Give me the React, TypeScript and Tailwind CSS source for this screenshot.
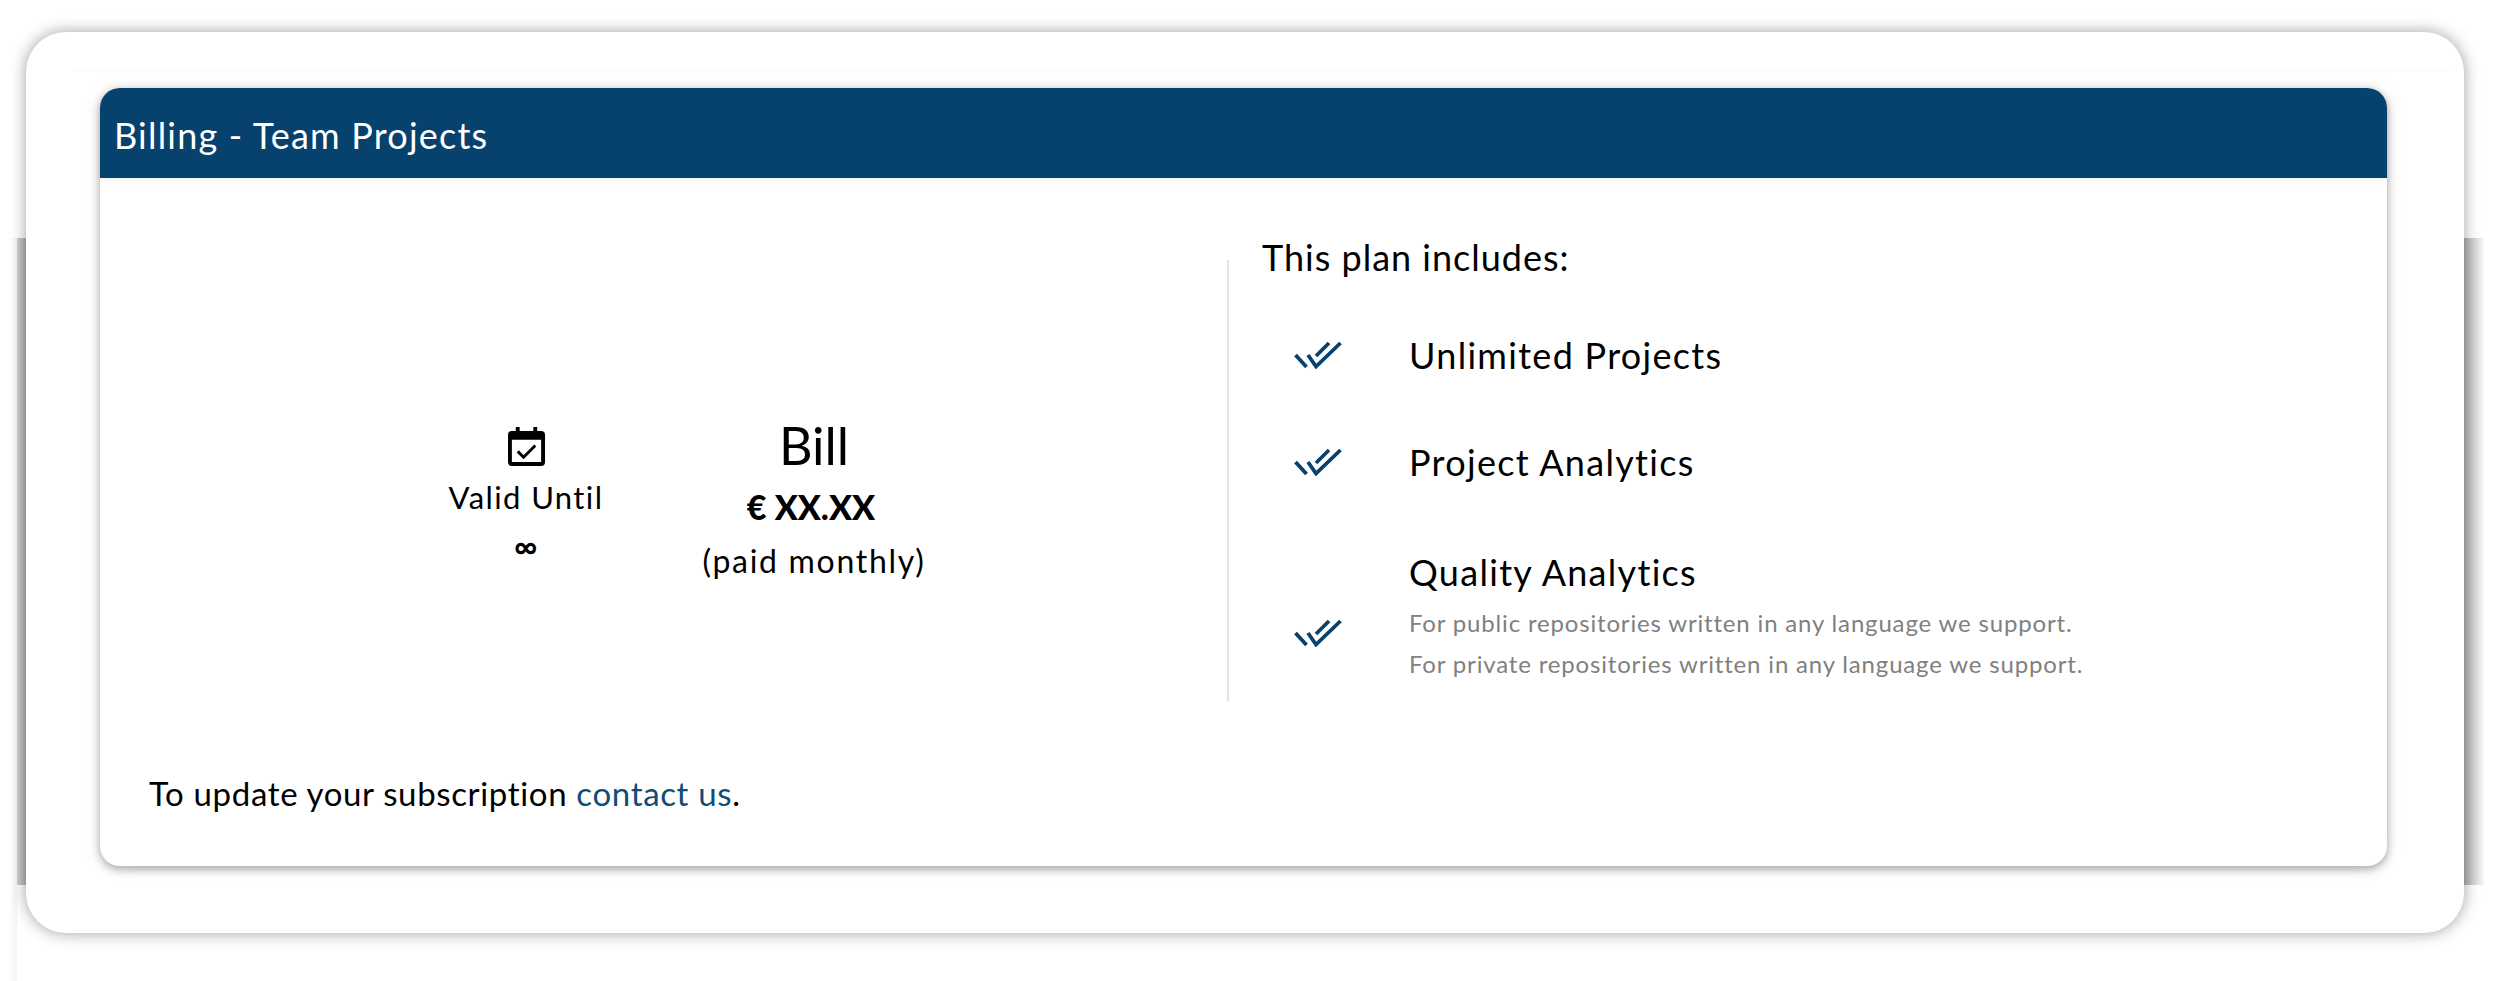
const features = [
  { title: 'Unlimited Projects' },
  { title: 'Project Analytics' },
  {
    title: 'Quality Analytics',
    notes: [
      'For public repositories written in any language we support.',
      'For private repositories written in any language we support.',
    ],
  },
];

function DoubleCheck({ low }: { low?: boolean }) {
  return (
    <svg
      width="48"
      height="28"
      viewBox="0 0 46 28"
      fill="none"
      stroke="#07416e"
      strokeWidth="3.8"
      className={low ? 'mt-[32px] shrink-0' : 'shrink-0'}
    >
      <path d="M0.5 14 L11.5 26" />
      <path d="M13 14 L21 25.5 L45.5 2" />
      <path d="M21 15 L34 2" />
    </svg>
  );
}

function CalendarCheck() {
  return (
    <svg width="39" height="41" viewBox="0 0 40 42" fill="black">
      <path
        fillRule="evenodd"
        d="M9 1h4v4h14V1h4v4h4a4 4 0 0 1 4 4v28a4 4 0 0 1-4 4H5a4 4 0 0 1-4-4V9a4 4 0 0 1 4-4h4V1zM5 14v23h30V14H5z"
      />
      <path d="M11 26l6 6 12-12" fill="none" stroke="black" strokeWidth="3" />
    </svg>
  );
}

export default function App() {
  return (
    <div className="relative h-[981px] w-[2500px] overflow-hidden bg-white pt-[32px] pl-[26px] font-['Lato',sans-serif] text-black">
      <div className="absolute top-[238px] bottom-0 left-[9px] w-[8px] bg-[linear-gradient(90deg,#ffffff,#f4f4f4)]" />
      <div className="absolute top-[238px] left-[17px] h-[647px] w-[2467px] bg-[linear-gradient(90deg,#d0d0d0_0,#b5b5b5_9px,#b5b5b5_2448px,#f8f8f8_100%)]" />
      <div className="relative h-[901px] w-[2438px] rounded-[40px] bg-white pt-[38px] pl-[48px] shadow-[0_0_16px_rgba(0,0,0,0.38)]">
        <div className="w-[2376px] border-t border-[#f8f8f8] pt-[17px] pl-[26px]">
          <div className="flex h-[778px] w-[2287px] flex-col rounded-[20px] bg-white shadow-[0_3px_10px_rgba(0,0,0,0.35),0_0_24px_rgba(0,0,0,0.05)]">
            <div className="flex h-[90px] items-center rounded-t-[20px] bg-[#07416e] pt-[3px] pl-[14px] text-[36px] tracking-[1.2px] text-white shadow-[0_2px_6px_rgba(0,0,0,0.06)]">
              Billing - Team Projects
            </div>
            <div className="mt-[82px] flex h-[441px]">
              <div className="flex w-[1127px] items-start gap-[78px] pt-[155px] pl-[336px]">
                <div className="flex w-[180px] flex-col items-center pt-[11px]">
                  <CalendarCheck />
                  <span className="mt-[11px] text-[31px] leading-[38px] tracking-[1.4px]">Valid Until</span>
                  <span className="mt-[13px] text-[32px] leading-[34px] font-bold">∞</span>
                </div>
                <div className="flex w-[240px] flex-col items-center">
                  <span className="text-[52px] leading-[60px]">Bill</span>
                  <span className="mt-[10px] mr-[6px] text-[34px] leading-[44px] font-black">€ XX.XX</span>
                  <span className="mt-[12px] text-[32px] leading-[40px] tracking-[1.7px]">(paid monthly)</span>
                </div>
              </div>
              <div className="flex flex-col border-l-2 border-[#e3e3e3] pl-[33px]">
                <span className="mt-[-25px] text-[36px] leading-[44px] tracking-[1px]">This plan includes:</span>
                <div className="mt-[54px] flex flex-col gap-[63px] pl-[32px]">
                  {features.map((f) => (
                    <div key={f.title} className="flex items-center gap-[67px] last:mt-[3px]">
                      <DoubleCheck low={!!f.notes} />
                      <div className="flex flex-col">
                        <span className="text-[36px] leading-[44px] tracking-[1.3px]">{f.title}</span>
                        {f.notes && (
                          <div className="mt-[8px] flex flex-col">
                            {f.notes.map((n) => (
                              <span key={n} className="text-[24px] leading-[41px] tracking-[0.83px] text-[#808080]">
                                {n}
                              </span>
                            ))}
                          </div>
                        )}
                      </div>
                    </div>
                  ))}
                </div>
              </div>
            </div>
            <p className="mt-[72px] pl-[49px] text-[33px] leading-[40px] tracking-[0.65px]">
              To update your subscription <span className="text-[#0f4c78]">contact us</span>.
            </p>
          </div>
        </div>
      </div>
    </div>
  );
}
